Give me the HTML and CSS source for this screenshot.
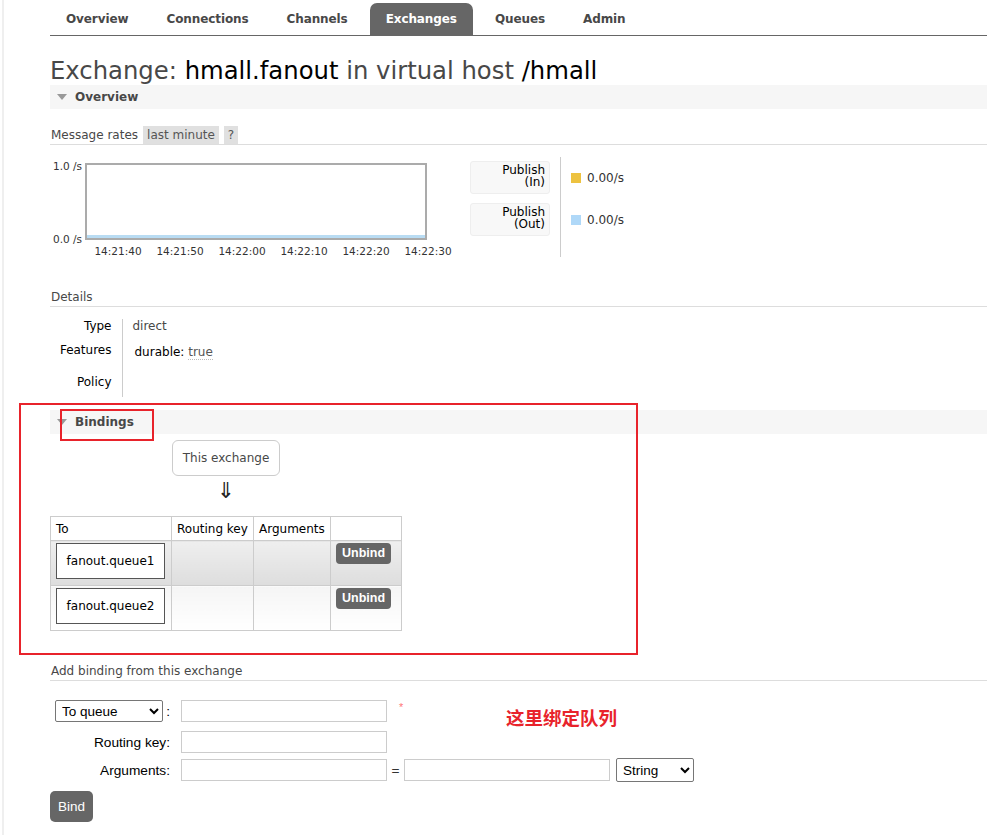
FILE: index.html
```html
<!DOCTYPE html>
<html lang="en">
<head>
<meta charset="utf-8">
<title>RabbitMQ Management</title>
<link rel="stylesheet" href="styles.css">
</head>
<body>
<div class="page">
  <ul class="tabs">
    <li class="tab">Overview</li>
    <li class="tab">Connections</li>
    <li class="tab">Channels</li>
    <li class="tab active">Exchanges</li>
    <li class="tab">Queues</li>
    <li class="tab">Admin</li>
  </ul>

  <h1 class="title">Exchange: <b>hmall.fanout</b> in virtual host <b>/hmall</b></h1>

  <div class="section">
    <h2 class="sec-head"><span class="tri"></span>Overview</h2>
    <h3 class="sub-head"><span class="sub-label">Message rates</span><span class="tag">last minute</span><span class="tag">?</span></h3>
    <div class="rates">
      <div class="chart-col">
        <div class="chart-row">
          <div class="ylabels"><span>1.0 /s</span><span>0.0 /s</span></div>
          <div class="chart"><div class="chart-line"></div></div>
        </div>
        <div class="xlabels">
          <span>14:21:40</span><span>14:21:50</span><span>14:22:00</span><span>14:22:10</span><span>14:22:20</span><span>14:22:30</span>
        </div>
      </div>
      <div class="legend">
        <div class="legend-labels">
          <div class="legend-box"><span>Publish</span><span>(In)</span></div>
          <div class="legend-box"><span>Publish</span><span>(Out)</span></div>
        </div>
        <div class="legend-values">
          <div class="legend-val"><span class="sw sw-in"></span>0.00/s</div>
          <div class="legend-val"><span class="sw sw-out"></span>0.00/s</div>
        </div>
      </div>
    </div>

    <h3 class="sub-head details-head"><span>Details</span></h3>
    <table class="facts">
      <tr class="r1"><th>Type</th><td>direct</td></tr>
      <tr class="r2"><th>Features</th><td><span class="feat-key">durable:</span> <span class="feat-val">true</span></td></tr>
      <tr class="r3"><th>Policy</th><td></td></tr>
    </table>
  </div>

  <div class="section bindings">
    <h2 class="sec-head"><span class="tri"></span>Bindings</h2>
    <div class="this-ex">This exchange</div>
    <div class="arrow">&#8659;</div>
    <table class="list">
      <thead>
        <tr><th class="c1">To</th><th class="c2">Routing key</th><th class="c3">Arguments</th><th class="c4"></th></tr>
      </thead>
      <tbody>
        <tr class="alt1"><td><div class="qbox">fanout.queue1</div></td><td></td><td></td><td><span class="btn-sm">Unbind</span></td></tr>
        <tr class="alt2"><td><div class="qbox">fanout.queue2</div></td><td></td><td></td><td><span class="btn-sm">Unbind</span></td></tr>
      </tbody>
    </table>
  </div>

  <h3 class="sub-head add-head"><span>Add binding from this exchange</span></h3>
  <div class="form">
    <div class="frow row1">
      <div class="flabel first"><select class="sel sel-dest"><option>To queue</option></select><span class="colon">:</span></div>
      <input class="txt" type="text">
      <span class="req">*</span>
    </div>
    <div class="frow row2">
      <div class="flabel">Routing key:</div>
      <input class="txt" type="text">
    </div>
    <div class="frow row3">
      <div class="flabel">Arguments:</div>
      <input class="txt" type="text">
      <span class="eq">=</span>
      <input class="txt" type="text">
      <select class="sel sel-type"><option>String</option></select>
    </div>
    <button class="btn-bind" type="button">Bind</button>
  </div>
</div>

<div class="mark mark-big"></div>
<div class="mark mark-small"></div>
<div class="note">这里绑定队列</div>
</body>
</html>
```

FILE: styles.css
```css
* { box-sizing: border-box; }

body {
  margin: 0;
  position: relative;
  font-family: "DejaVu Sans", Verdana, sans-serif;
  font-size: 12px;
  color: #484848;
  background: #fff;
}

.page {
  margin-left: 2px;
  border-left: 2px solid #efefef;
  padding-left: 46px;
  min-height: 835px;
}

/* nav tabs */
.tabs {
  display: flex;
  gap: 6px;
  list-style: none;
  margin: 0;
  padding: 3px 0 0;
  border-bottom: 1px solid #666;
}
.tab {
  height: 32px;
  line-height: 31px;
  padding: 1px 16px 0;
  font-weight: bold;
  font-size: 12px;
  letter-spacing: -0.1px;
  color: #484848;
  border-radius: 7px 7px 0 0;
}
.tab.active { background: #666; color: #fff; }

/* title */
.title {
  margin: 21px 0 0;
  height: 28px;
  line-height: 28px;
  font-size: 24.3px;
  font-weight: normal;
  color: #484848;
}
.title b { font-weight: normal; color: #000; }

/* section header */
.sec-head {
  display: flex;
  align-items: center;
  margin: 0;
  height: 24px;
  padding-left: 7px;
  background: #f6f6f6;
  font-size: 12px;
  font-weight: bold;
  color: #484848;
}
.tri {
  width: 0;
  height: 0;
  border-left: 5px solid transparent;
  border-right: 5px solid transparent;
  border-top: 6px solid #999;
  margin-right: 8px;
}

.sub-head {
  display: flex;
  align-items: center;
  gap: 5px;
  margin: 17px 0 0;
  height: 19px;
  border-bottom: 1px solid #ddd;
  font-size: 12px;
  font-weight: normal;
  color: #484848;
  padding-left: 1px;
  padding-bottom: 1px;
}
.tag {
  background: #e0e0e0;
  height: 18px;
  line-height: 18px;
  padding: 0 4px;
  color: #555;
}

/* rates */
.rates {
  display: flex;
  margin-top: 12px;
}
.chart-col { width: 420px; }
.chart-row { display: flex; align-items: flex-start; padding-top: 6px; }
.ylabels {
  width: 35px;
  height: 85px;
  margin-top: -3px;
  padding-right: 3px;
  display: flex;
  flex-direction: column;
  justify-content: space-between;
  align-items: flex-end;
  font-size: 10.5px;
  line-height: 12px;
  color: #333;
}
.chart {
  width: 342px;
  height: 77px;
  border: 2px solid #ababab;
  display: flex;
  flex-direction: column;
  justify-content: flex-end;
  background: #fff;
}
.chart-line { height: 3px; background: #b9dcf3; }
.xlabels {
  display: flex;
  margin: 0 0 0 37px;
  font-size: 10.5px;
  line-height: 12px;
  color: #333;
}
.xlabels span { width: 62px; text-align: center; }

.legend { display: flex; }
.legend-labels {
  display: flex;
  flex-direction: column;
  gap: 9px;
  padding: 4px 10px 4px 0;
  border-right: 1px solid #ccc;
}
.legend-box {
  width: 80px;
  height: 33px;
  background: #f8f8f8;
  border: 1px solid #eee;
  border-radius: 3px;
  display: flex;
  flex-direction: column;
  align-items: flex-end;
  padding: 2px 4px 0 0;
  line-height: 12px;
  color: #000;
}
.legend-values {
  display: flex;
  flex-direction: column;
  gap: 9px;
  padding: 4px 0 4px 10px;
}
.legend-val {
  height: 33px;
  display: flex;
  align-items: center;
  color: #333;
}
.sw { width: 10px; height: 10px; margin-right: 6px; }
.sw-in { background: #edc240; }
.sw-out { background: #afd8f8; }

/* details */
.details-head { margin-top: 31px; }
.facts {
  border-collapse: collapse;
  margin-top: 12px;
}
.facts th, .facts td {
  vertical-align: top;
  padding: 0;
  line-height: 14px;
}
.facts th {
  width: 72px;
  padding-right: 10px;
  text-align: right;
  font-weight: normal;
  color: #000;
}
.facts td {
  border-left: 1px solid #ccc;
  padding-left: 10px;
  width: 200px;
}
.facts .r1 th, .facts .r1 td { height: 24px; }
.facts .r2 th, .facts .r2 td { height: 31px; }
.facts .r3 th, .facts .r3 td { height: 23px; padding-top: 1px; }
.feat-key { color: #000; margin-left: 2px; }
.feat-val {
  display: inline-block;
  margin-top: 2px;
  border-bottom: 1px dotted #bbb;
  color: #555;
}

/* bindings */
.bindings { margin-top: 13px; }
.this-ex {
  margin: 6px 0 0 122px;
  width: 108px;
  height: 36px;
  line-height: 34px;
  border: 1px solid #ccc;
  border-radius: 6px;
  text-align: center;
  color: #484848;
}
.arrow {
  margin: 3px 0 0 122px;
  width: 108px;
  height: 24px;
  line-height: 24px;
  text-align: center;
  font-size: 22px;
  color: #222;
}
.list {
  margin-top: 13px;
  border-collapse: collapse;
  border: 1px solid #ccc;
}
.list th, .list td { border: 1px solid #ccc; padding: 0; }
.list th {
  height: 24px;
  text-align: left;
  font-weight: normal;
  color: #000;
  padding: 0 5px;
}
.c1 { width: 121px; }
.c2 { width: 82px; }
.c3 { width: 77px; }
.c4 { width: 71px; }
.list td { height: 45px; vertical-align: top; padding: 2px 5px; }
.alt1 td { background: linear-gradient(#efefef, #dddddd); }
.alt2 td { background: linear-gradient(#f5f5f5, #ffffff); }
.qbox {
  width: 109px;
  height: 36px;
  line-height: 34px;
  border: 1px solid #555;
  background: #fff;
  text-align: center;
  color: #000;
}
.btn-sm {
  display: inline-block;
  width: 55px;
  height: 21px;
  line-height: 20px;
  background: #666;
  color: #fff;
  border-radius: 4px;
  text-align: center;
  font-family: "Liberation Sans", Arial, sans-serif;
  font-weight: bold;
  font-size: 12.5px;
}

/* add binding */
.add-head { margin-top: 31px; }
.form { margin-top: 19px; font-family: "Liberation Sans", Arial, sans-serif; font-size: 13.7px; color: #000; }
.frow { display: flex; align-items: center; }
.row2 { margin-top: 9px; }
.row3 { margin-top: 5px; }
.flabel {
  width: 131px;
  padding-right: 11px;
  text-align: right;
}
.flabel.first {
  display: flex;
  align-items: center;
  text-align: left;
  padding-left: 5px;
}
.colon { margin-left: 3px; }
.txt {
  width: 206px;
  height: 22px;
  border: 1px solid #ccc;
  padding: 0;
  margin: 0;
  background: #fff;
}
.sel {
  height: 22px;
  border: 1px solid #767676;
  border-radius: 2px;
  background: #fff;
  font-family: "Liberation Sans", Arial, sans-serif;
  font-size: 13.5px;
  color: #000;
  padding: 0 2px;
  margin: 0;
}
.sel-dest { width: 111px; }
.sel-type { width: 78px; height: 24px; margin-left: 6px; }
.req { color: #f77; font-size: 11px; margin-left: 12px; align-self: flex-start; margin-top: 1px; }
.eq { width: 17px; text-align: center; color: #333; }
.btn-bind {
  margin-top: 9px;
  width: 43px;
  height: 31px;
  border: 0;
  border-radius: 5px;
  background: #666;
  color: #fff;
  font-family: "Liberation Sans", Arial, sans-serif;
  font-size: 13.5px;
  padding: 0;
}

/* annotations */
.mark { position: absolute; border: 2px solid #e8232b; }
.mark-big { left: 19px; top: 403px; width: 619px; height: 252px; }
.mark-small { left: 60px; top: 409px; width: 94px; height: 32px; }
.note {
  position: absolute;
  left: 506px;
  top: 704px;
  font-family: "Noto Sans CJK SC", sans-serif;
  font-weight: bold;
  font-size: 18.5px;
  line-height: 26px;
  color: #e8232b;
}
```
